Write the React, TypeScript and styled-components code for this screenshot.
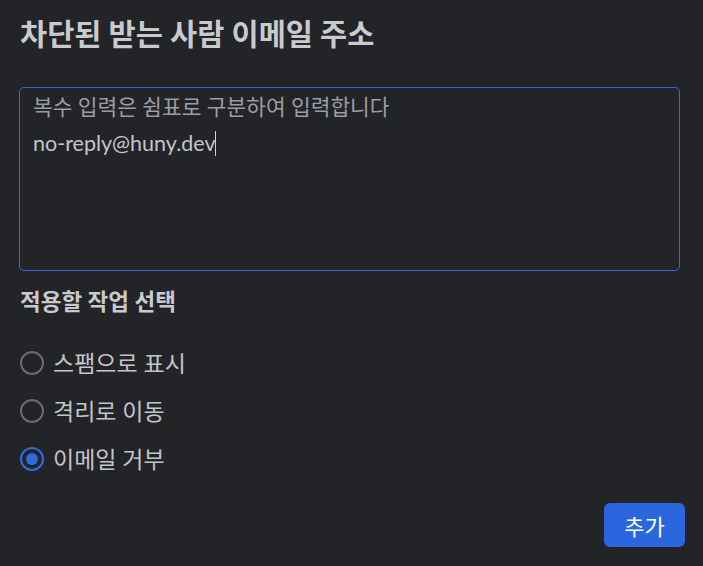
import styled, {createGlobalStyle} from "styled-components";

// 스타일
const GlobalStyle = createGlobalStyle`
  html, body {
    margin: 0;
    background: #232427;
  }
  body {
    font-family: "Lato", "Noto Sans CJK KR", sans-serif;
  }
`;
const Container = styled.section`
  width: 703px;
  height: 566px;
  box-sizing: border-box;
  padding: 14px 18px 0 19px;
  display: flex;
  flex-direction: column;
`;
const Title = styled.h1`
  margin: 0 0 0 1px;
  font-size: 29.5px;
  line-height: 40px;
  font-weight: 700;
  color: #c9cacd;
`;
const InputBox = styled.div`
  margin: 33px 5px 0 0;
  height: 184px;
  box-sizing: border-box;
  border: 1px solid #3168e2;
  border-radius: 5px;
  padding: 5px 13px;
  display: flex;
  flex-direction: column;
  gap: 8px;
`;
const Hint = styled.div`
  font-size: 21.4px;
  line-height: 28px;
  color: #9c9da1;
`;
const Value = styled.div`
  font-size: 21.5px;
  line-height: 28px;
  color: #c4c5c8;
  display: flex;
  align-items: center;
`;
const Caret = styled.span`
  width: 1px;
  height: 25px;
  background: #d0d0d0;
`;
const SubTitle = styled.h2`
  margin: 15px 0 0 1px;
  font-size: 22.5px;
  line-height: 32px;
  font-weight: 700;
  color: #c9cacd;
`;
const RadioList = styled.div`
  margin-top: 31px;
  display: flex;
  flex-direction: column;
  gap: 20px;
`;
const RadioRow = styled.label`
  display: flex;
  align-items: center;
  gap: 9px;
  font-size: 23px;
  line-height: 28px;
  color: #c4c5c8;
`;
const Circle = styled.span<{$checked: boolean}>`
  width: 24px;
  height: 24px;
  flex-shrink: 0;
  box-sizing: border-box;
  border-radius: 50%;
  border: 2px solid ${props => props.$checked ? "#2f6ae0" : "#6b6c70"};
  display: flex;
  align-items: center;
  justify-content: center;
  margin-left: 1px;

  &::after {
    content: "";
    width: 12px;
    height: 12px;
    border-radius: 50%;
    background: #2f6ae0;
    display: ${props => props.$checked ? "block" : "none"};
  }
`;
const Footer = styled.div`
  margin-top: 30px;
  display: flex;
  justify-content: flex-end;
`;
const AddButton = styled.button`
  width: 81px;
  height: 44px;
  border: none;
  border-radius: 6px;
  background: #2c66de;
  color: #ffffff;
  font-family: "Noto Sans CJK KR", sans-serif;
  font-size: 22px;
`;

// 기능
const actions = [
  {id: "spam", label: "스팸으로 표시", checked: false},
  {id: "quarantine", label: "격리로 이동", checked: false},
  {id: "reject", label: "이메일 거부", checked: true},
];

function App() {
  return (
    <Container>
      <GlobalStyle />
      <Title>차단된 받는 사람 이메일 주소</Title>
      <InputBox>
        <Hint>복수 입력은 쉼표로 구분하여 입력합니다</Hint>
        <Value>no-reply@huny.dev<Caret /></Value>
      </InputBox>
      <SubTitle>적용할 작업 선택</SubTitle>
      <RadioList>
        {actions.map(action => (
          <RadioRow key={action.id}>
            <Circle $checked={action.checked} />
            {action.label}
          </RadioRow>
        ))}
      </RadioList>
      <Footer>
        <AddButton>추가</AddButton>
      </Footer>
    </Container>
  );
}

export default App;
